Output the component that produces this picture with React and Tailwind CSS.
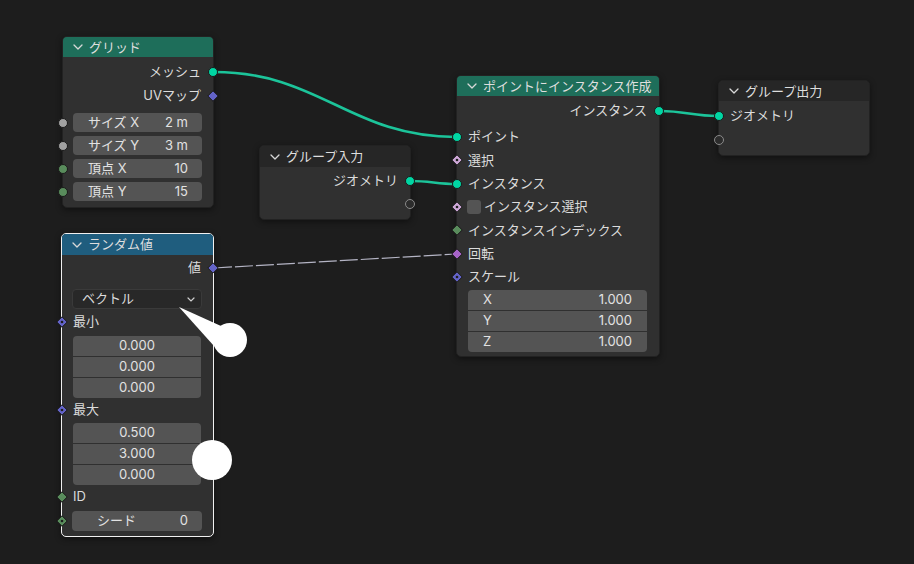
import React from 'react';

const FONT = "font-['Inter','Noto_Sans_CJK_JP',sans-serif]";

function Chevron() {
  return (
    <svg width="10" height="6" viewBox="0 0 10 6" className="shrink-0">
      <polyline points="1,1 5,5 9,1" fill="none" stroke="#d8d8d8" strokeWidth="1.3" strokeLinecap="round" strokeLinejoin="round" />
    </svg>
  );
}

// socket drawn over the node edge
function Socket({ side = 'left', shape = 'circle', color = 'bg-[#00d6a3]', fill = '#6363c7', dot = false, empty = false }) {
  const pos = side === 'left' ? 'left-[-5px]' : 'right-[-5px]';
  if (empty) {
    return (
      <span className={`absolute top-1/2 -translate-y-1/2 ${pos} w-[10px] h-[10px] rounded-full border border-[#8a8a8a] bg-[#2c2c2c]`} />
    );
  }
  if (shape === 'circle') {
    return (
      <span className={`absolute top-1/2 -translate-y-1/2 ${pos} w-[10px] h-[10px] rounded-full border border-[#1a1a1a] ${color}`} />
    );
  }
  return (
    <svg
      width="12"
      height="12"
      viewBox="0 0 12 12"
      className={`absolute top-1/2 -translate-y-1/2 ${side === 'left' ? 'left-[-6px]' : 'right-[-6px]'}`}
    >
      <polygon points="6,0.8 11.2,6 6,11.2 0.8,6" fill={fill} stroke="#1a1a1a" strokeWidth="1" />
      {dot && <circle cx="6" cy="6" r="1.3" fill="#1e1e1e" />}
    </svg>
  );
}

function Header({ title, bg, h = 'h-[21px]' }) {
  return (
    <div className={`${h} ${bg} rounded-t-[4px] flex items-center gap-[6px] pl-[10px] text-[13px] text-[#dedede]`}>
      <Chevron />
      <span className="leading-none">{title}</span>
    </div>
  );
}

function OutRow({ label, h = 'h-6', children }) {
  return (
    <div className={`relative ${h} flex items-center justify-end pr-[12px] text-[13px] text-[#dcdcdc]`}>
      <span>{label}</span>
      {children}
    </div>
  );
}

function InRow({ label, h = 'h-6', children, extra }) {
  return (
    <div className={`relative ${h} flex items-center gap-[4px] pl-[11px] text-[13px] text-[#dcdcdc]`}>
      {extra}
      <span>{label}</span>
      {children}
    </div>
  );
}

function Field({ label, value, h = 'h-[19px]', pad = 'px-[15px]', rounded = 'rounded-[4px]', center = false }) {
  return (
    <div className={`${h} ${rounded} ${pad} bg-[#545454] flex items-center ${center ? 'justify-center' : 'justify-between'} text-[13px] text-[#e2e2e2]`}>
      {label && <span>{label}</span>}
      <span>{value}</span>
    </div>
  );
}

function FieldGroup({ values, className = '' }) {
  return (
    <div className={`flex flex-col gap-[1px] ml-[11px] mr-[12px] ${className}`}>
      {values.map((v, i) => (
        <div
          key={i}
          className={`h-[20px] bg-[#545454] flex items-center ${v.label ? 'justify-between px-[15px]' : 'justify-center'} text-[13px] text-[#e2e2e2] ${i === 0 ? 'rounded-t-[4px]' : ''} ${i === values.length - 1 ? 'rounded-b-[4px]' : ''}`}
        >
          {v.label && <span>{v.label}</span>}
          <span>{v.value}</span>
        </div>
      ))}
    </div>
  );
}

function Links() {
  return (
    <svg className="absolute inset-0" width="914" height="564" viewBox="0 0 914 564">
      <path d="M214 72 C 320 72, 350 137, 456 137" fill="none" stroke="#1cc49a" strokeWidth="2.6" />
      <path d="M411 181 C 430 181, 437 184, 456 184" fill="none" stroke="#1cc49a" strokeWidth="2.6" />
      <path d="M660 111 C 685 111, 693 116, 718 116" fill="none" stroke="#1cc49a" strokeWidth="2.6" />
      <path d="M214 268 L 456 254" fill="none" stroke="#b4b4c4" strokeWidth="1.2" strokeDasharray="18 3" />
    </svg>
  );
}

function Annotations() {
  return (
    <svg className="absolute inset-0 pointer-events-none" width="914" height="564" viewBox="0 0 914 564">
      <polygon points="179,307 221,326 214,346" fill="#ffffff" />
      <circle cx="230" cy="340" r="17" fill="#ffffff" />
      <circle cx="212" cy="460" r="20" fill="#ffffff" />
    </svg>
  );
}

export default function App() {
  const node = 'absolute rounded-[5px] bg-[#303030] shadow-[0_2px_6px_rgba(0,0,0,0.45)]';
  return (
    <div className={`relative w-[914px] h-[564px] overflow-hidden bg-[#1d1d1d] ${FONT}`}>
      <Links />

      {/* グリッド */}
      <div className={`${node} left-[62px] top-[36px] w-[152px] border border-[#222]`}>
        <Header title="グリッド" bg="bg-[#1e6e5a]" h="h-[20px]" />
        <div className="pt-[3px] pb-[4px]">
          <OutRow label="メッシュ"><Socket side="right" /></OutRow>
          <OutRow label="UVマップ"><Socket side="right" shape="diamond" fill="#6363c7" /></OutRow>
          <div className="mt-[3px]">
            {[
              ['サイズ X', '2 m', 'bg-[#a1a1a1]'],
              ['サイズ Y', '3 m', 'bg-[#a1a1a1]'],
              ['頂点 X', '10', 'bg-[#598c5c]'],
              ['頂点 Y', '15', 'bg-[#598c5c]'],
            ].map(([l, v, c]) => (
              <div key={l} className="relative h-[23px] flex items-center pl-[10px] pr-[11px]">
                <Socket color={c} />
                <div className="flex-1">
                  <Field label={l} value={v} pad="pl-[15px] pr-[14px]" />
                </div>
              </div>
            ))}
          </div>
        </div>
      </div>

      {/* ランダム値 */}
      <div className={`${node} left-[61px] top-[233px] w-[153px] border border-[#f0f0f0]`}>
        <Header title="ランダム値" bg="bg-[#1f5d7e]" />
        <div className="pt-[1px] pb-[5px]">
          <OutRow label="値"><Socket side="right" shape="diamond" fill="#6363c7" /></OutRow>
          <div className="mt-[9px] ml-[10px] mr-[11px] h-[20px] rounded-[4px] bg-[#282828] border border-[#3a3a3a] flex items-center justify-between pl-[9px] pr-[6px] text-[13px] text-[#dcdcdc]">
            <span>ベクトル</span>
            <svg width="8" height="5" viewBox="0 0 8 5"><polyline points="1,1 4,4 7,1" fill="none" stroke="#cfcfcf" strokeWidth="1.2" strokeLinecap="round" /></svg>
          </div>
          <div className="mt-[2px]">
            <InRow label="最小" h="h-[22px]"><Socket shape="diamond" fill="#6363c7" dot /></InRow>
          </div>
          <FieldGroup className="mt-[3px] mx-[10px]" values={[{ value: '0.000' }, { value: '0.000' }, { value: '0.000' }]} />
          <InRow label="最大" h="h-[24px]"><Socket shape="diamond" fill="#6363c7" dot /></InRow>
          <FieldGroup className="mt-[1px]" values={[{ value: '0.500' }, { value: '3.000' }, { value: '0.000' }]} />
          <InRow label="ID" h="h-[24px]"><Socket shape="diamond" fill="#598c5c" /></InRow>
          <div className="relative mt-[2px] pl-[10px] pr-[11px]">
            <Socket shape="diamond" fill="#598c5c" dot />
            <Field label="シード" value="0" h="h-[20px]" pad="pl-[25px] pr-[14px]" />
          </div>
        </div>
      </div>

      {/* グループ入力 */}
      <div className={`${node} left-[259px] top-[145px] w-[152px] border border-[#222]`}>
        <Header title="グループ入力" bg="bg-[#262626]" h="h-[21px]" />
        <div className="pt-[2px] pb-[4px]">
          <OutRow label="ジオメトリ"><Socket side="right" /></OutRow>
          <OutRow label="" h="h-[22px]"><Socket side="right" empty /></OutRow>
        </div>
      </div>

      {/* ポイントにインスタンス作成 */}
      <div className={`${node} left-[456px] top-[75px] w-[204px] border border-[#222]`}>
        <Header title="ポイントにインスタンス作成" bg="bg-[#1e6e5a]" h="h-[20px]" />
        <div className="pt-[3px] pb-[4px]">
          <OutRow label="インスタンス"><Socket side="right" /></OutRow>
          <div className="mt-[2.5px]">
            <InRow label="ポイント" h="h-[23.3px]"><Socket /></InRow>
            <InRow label="選択" h="h-[23.3px]"><Socket shape="diamond" fill="#cca6d6" dot /></InRow>
            <InRow label="インスタンス" h="h-[23.3px]"><Socket /></InRow>
            <InRow
              label="インスタンス選択"
              h="h-[23.3px]"
              extra={<span className="w-[14px] h-[14px] rounded-[3px] bg-[#545454] -ml-[1px] -mr-[1px]" />}
            >
              <Socket shape="diamond" fill="#cca6d6" dot />
            </InRow>
            <InRow label="インスタンスインデックス" h="h-[23.3px]"><Socket shape="diamond" fill="#598c5c" /></InRow>
            <InRow label="回転" h="h-[23.3px]"><Socket shape="diamond" fill="#a663c7" /></InRow>
            <InRow label="スケール" h="h-[23.3px]"><Socket shape="diamond" fill="#6363c7" dot /></InRow>
          </div>
          <FieldGroup
            className="mt-[1.5px]"
            values={[
              { label: 'X', value: '1.000' },
              { label: 'Y', value: '1.000' },
              { label: 'Z', value: '1.000' },
            ]}
          />
        </div>
      </div>

      {/* グループ出力 */}
      <div className={`${node} left-[718px] top-[80px] w-[152px] border border-[#222]`}>
        <Header title="グループ出力" bg="bg-[#262626]" h="h-[20px]" />
        <div className="pt-[3px] pb-[3px]">
          <InRow label="ジオメトリ"><Socket /></InRow>
          <InRow label=""><Socket empty /></InRow>
        </div>
      </div>

      <Annotations />
    </div>
  );
}
